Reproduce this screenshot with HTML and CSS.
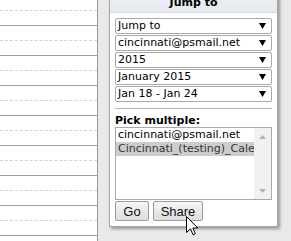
FILE: index.html
```
<!DOCTYPE html>
<html lang="en">
  <head>
    <meta charset="UTF-8" />
    <meta name="viewport" content="width=device-width, initial-scale=1.0" />
    <title>Jump to</title>
    <link rel="stylesheet" href="styles.css">
  </head>
  <body>
    <div class="page">
      <div class="calendar">
        <div class="slot"><div class="half"></div></div>
        <div class="slot"><div class="half"></div></div>
        <div class="slot"><div class="half"></div></div>
        <div class="slot"><div class="half"></div></div>
        <div class="slot"><div class="half"></div></div>
        <div class="slot"><div class="half"></div></div>
        <div class="slot"><div class="half"></div></div>
        <div class="slot"><div class="half"></div></div>
        <div class="slot"><div class="half"></div></div>
      </div>
      <div class="panel">
        <div class="panel-head">Jump to</div>
        <div class="panel-body">
          <div class="dropdown"><span>Jump to</span><svg class="caret" viewBox="0 0 7 6"><polygon points="0,0 7,0 3.5,6" /></svg></div>
          <div class="dropdown"><span>cincinnati@psmail.net</span><svg class="caret" viewBox="0 0 7 6"><polygon points="0,0 7,0 3.5,6" /></svg></div>
          <div class="dropdown"><span>2015</span><svg class="caret" viewBox="0 0 7 6"><polygon points="0,0 7,0 3.5,6" /></svg></div>
          <div class="dropdown"><span>January 2015</span><svg class="caret" viewBox="0 0 7 6"><polygon points="0,0 7,0 3.5,6" /></svg></div>
          <div class="dropdown"><span>Jan 18 - Jan 24</span><svg class="caret" viewBox="0 0 7 6"><polygon points="0,0 7,0 3.5,6" /></svg></div>
          <div class="rule"></div>
          <div class="label">Pick multiple:</div>
          <div class="listbox">
            <div class="options">
              <div class="option">cincinnati@psmail.net</div>
              <div class="option selected">Cincinnati_(testing)_Calendar</div>
            </div>
            <div class="scrollbar">
              <svg class="arrow" viewBox="0 0 7 4"><polygon points="0,4 7,4 3.5,0" /></svg>
              <svg class="arrow" viewBox="0 0 7 4"><polygon points="0,0 7,0 3.5,4" /></svg>
            </div>
          </div>
          <div class="buttons">
            <button class="btn go">Go</button>
            <button class="btn share">Share</button>
          </div>
        </div>
      </div>
    </div>
    <svg class="cursor" viewBox="0 0 13 21"><path d="M0.5 0.5 L0.5 16.5 L4.5 12.8 L7 18.8 L9.3 17.8 L6.9 12 L11.8 12 Z" /></svg>
  </body>
</html>
```
FILE: styles.css
```
body {
  margin: 0;
  background: #e9e9e9;
  font-family: "DejaVu Sans", Verdana, sans-serif;
  font-size: 11px;
  color: #000;
  overflow: hidden;
}
.page {
  display: flex;
  align-items: flex-start;
  height: 241px;
  overflow: hidden;
}
/* columna del calendario a la izquierda */
.calendar {
  width: 97px;
  height: 245px;
  margin-top: -4px;
  background: #fff;
  border-right: 1px solid #9a9a9a;
  flex-shrink: 0;
  overflow: hidden;
}
.slot {
  height: 29px;
  border-bottom: 1px solid #a3a3a3;
}
.slot .half {
  height: 14px;
  border-bottom: 1px dashed #d2d2d2;
}
/* panel de saltos */
.panel {
  width: 169px;
  box-sizing: border-box;
  margin-left: 11px;
  margin-top: -8px;
  background: #fff;
  border: 1px solid #a6a6a6;
  box-shadow: 2px 2px 3px rgba(0, 0, 0, 0.35);
}
.panel-head {
  height: 19px;
  line-height: 19px;
  text-align: center;
  font-weight: bold;
  background: linear-gradient(#f0f3f7, #e3e8ef);
  border-bottom: 1px solid #d7dce3;
}
.panel-body {
  padding: 5px;
}
.dropdown {
  display: flex;
  align-items: center;
  justify-content: space-between;
  height: 16px;
  box-sizing: border-box;
  margin-bottom: 1px;
  padding: 0 5px 0 2px;
  border: 1px solid #a9a9a9;
  border-radius: 2px;
  line-height: 14px;
  white-space: nowrap;
}
.caret {
  width: 7px;
  height: 6px;
  fill: #000;
}
.rule {
  margin: 6px 0 5px;
  border-top: 1px solid #b0b0b0;
}
.label {
  font-weight: bold;
  line-height: 13px;
}
.listbox {
  display: flex;
  height: 73px;
  box-sizing: border-box;
  border: 1px solid #a9a9a9;
  margin-bottom: 1px;
}
.options {
  flex: 1;
  overflow: hidden;
  white-space: nowrap;
}
.option {
  height: 14px;
  line-height: 14px;
  padding-left: 2px;
}
.option.selected {
  background: #cdcdcd;
  color: #333;
}
.scrollbar {
  width: 17px;
  background: #f1f1f1;
  display: flex;
  flex-direction: column;
  justify-content: space-between;
  align-items: center;
  padding: 7px 0 6px;
  box-sizing: border-box;
}
.arrow {
  width: 7px;
  height: 4px;
  fill: #b3b3b3;
}
.buttons {
  display: flex;
  gap: 4px;
}
.btn {
  height: 20px;
  padding: 0;
  font-family: "Liberation Sans", Arial, sans-serif;
  font-size: 13px;
  color: #111;
  background: linear-gradient(#f6f6f6, #dddddd);
  border: 1px solid #9c9c9c;
  border-radius: 2px;
}
.go {
  width: 34px;
}
.share {
  width: 50px;
}
/* puntero del ratón encima del botón */
.cursor {
  position: absolute;
  left: 186px;
  top: 216px;
  width: 13px;
  height: 21px;
  fill: #fff;
  stroke: #000;
  stroke-width: 1;
}
```
